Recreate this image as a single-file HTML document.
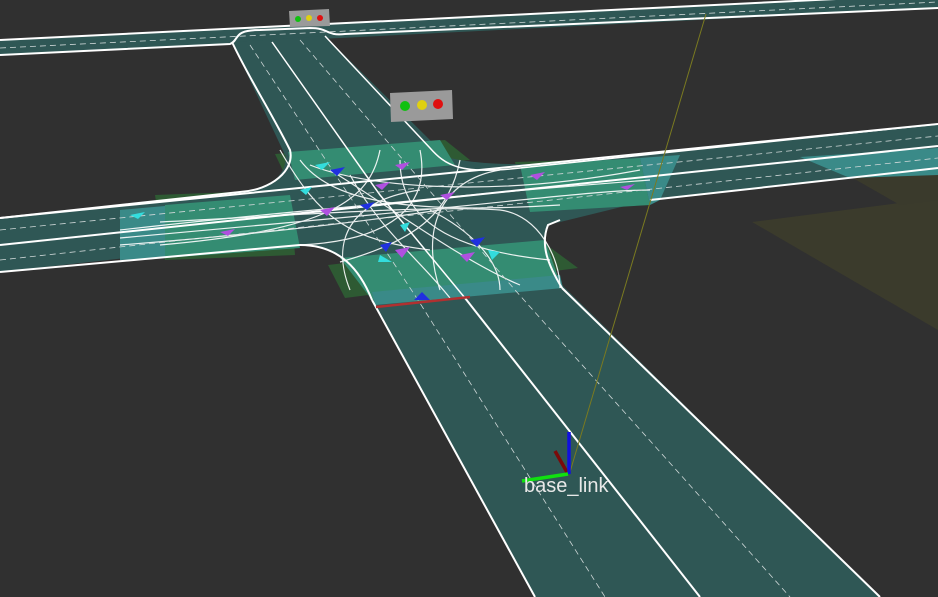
<!DOCTYPE html>
<html><head><meta charset="utf-8"><style>
html,body{margin:0;padding:0;background:#303030;overflow:hidden;width:938px;height:597px}
svg{display:block}
</style></head><body>
<svg width="938" height="597" viewBox="0 0 938 597" xmlns="http://www.w3.org/2000/svg">
<rect width="938" height="597" fill="#303030"/>
<polygon points="752,222 938,198 938,330" fill="#3b3b2c"/>
<polygon points="830,165 938,160 938,200 900,205" fill="#3a3a2c"/>
<polygon points="275,154 445,140 470,160 285,175" fill="#2e5a33"/>
<polygon points="155,195 290,190 295,255 165,260" fill="#2e5a33"/>
<polygon points="328,265 540,240 578,268 345,298" fill="#2e5a33"/>
<polygon points="515,162 640,158 650,205 525,210" fill="#2e5a33"/>
<polygon points="0,40 938,-6 938,8 0,55" fill="#2f5755"/>
<polygon points="232,42 325,36 440,150 285,155" fill="#2f5755"/>
<polygon points="0,218 938,124 938,168 0,272" fill="#2f5755"/>
<polygon points="372,300 562,285 880,597 535,597" fill="#2f5755"/>
<path d="M285,150 C290,175 270,188 240,192 L120,205 L120,258 L300,245 C340,245 360,270 372,300 L562,288 C548,265 540,245 548,225 L650,200 L640,158 C560,165 460,170 430,150 Z" fill="#2f5755"/>
<polygon points="120,210 165,206 165,258 120,260" fill="#3a8a88"/>
<polygon points="165,205 290,195 300,248 165,258" fill="#348c72"/>
<polygon points="288,152 440,140 455,165 295,180" fill="#348c72"/>
<polygon points="340,258 545,240 562,288 372,300" fill="#348c72"/>
<polygon points="372,292 560,275 563,288 375,305" fill="#3a8a88"/>
<polygon points="520,165 640,158 650,205 530,212" fill="#348c72"/>
<polygon points="640,158 680,155 660,200 650,205" fill="#3a8a88"/>
<polygon points="800,157 938,148 938,175 850,178" fill="#3a8a88"/>
<g fill="none" stroke="#ffffff" stroke-width="2">
<path d="M0,40 L938,-6"/><path d="M0,55 L230,44 C240,40 232,30 260,30 L310,28 C330,28 325,36 345,34 L938,8"/>
<path d="M0,218 L938,124"/><path d="M0,272 L300,245"/><path d="M650,200 L938,168"/>
<path d="M0,245 L938,146"/>
<path d="M232,42 C250,80 270,110 290,150 C295,170 272,190 240,192 L0,218"/>
<path d="M325,36 L430,148 C445,165 460,175 520,168 L938,124" stroke-width="1.5"/>
<path d="M372,300 L535,597"/>
<path d="M465,298 L700,597"/>
<path d="M562,288 L880,597"/>
<path d="M562,288 C548,265 540,245 548,225 L560,220"/>
<path d="M300,245 C340,245 360,270 372,300"/>
<path d="M272,42 L380,195 L465,298" stroke-width="1.5"/>
</g>
<g fill="none" stroke="#ffffff" stroke-width="1.2" opacity="0.9">
<path d="M280,150 C320,220 350,240 430,250"/>
<path d="M300,160 C330,200 400,215 560,205"/>
<path d="M120,230 C250,215 320,210 420,200 C470,195 520,190 650,180"/>
<path d="M120,245 C250,235 360,222 440,210"/>
<path d="M350,290 C330,240 350,200 420,190"/>
<path d="M440,290 C420,230 440,180 500,170"/>
<path d="M330,170 C380,200 460,260 520,285"/>
<path d="M420,150 C430,200 400,240 300,245"/>
<path d="M400,160 C400,220 450,250 550,260"/>
<path d="M160,222 C300,215 430,205 500,210 C540,215 560,260 560,288"/>
<path d="M120,238 C260,225 380,215 520,200 C580,194 620,190 650,190"/>
<path d="M350,175 C380,230 420,260 450,298"/>
<path d="M460,160 C450,210 420,240 340,262"/>
<path d="M380,150 C370,200 330,230 160,245"/>
<path d="M310,165 C360,185 480,200 640,170"/>
<path d="M430,210 C470,230 500,260 500,290"/>
</g>
<g fill="none" stroke="#cfd8d8" stroke-width="0.8" stroke-dasharray="6 4">
<path d="M0,230 L938,136"/><path d="M0,260 L938,158"/><path d="M0,48 L938,2"/>
<path d="M250,45 L418,300 L605,597"/><path d="M300,40 L515,290 L790,597"/>
</g>
<g>
<polygon points="315,165 330,162 322,170" fill="#33dddd"/><polygon points="330,170 345,167 337,176" fill="#2030e0"/>
<polygon points="375,185 390,182 382,190" fill="#b050e0"/><polygon points="395,165 410,162 402,170" fill="#b050e0"/>
<polygon points="320,210 335,207 327,216" fill="#b050e0"/><polygon points="360,205 375,202 367,210" fill="#2030e0"/>
<polygon points="440,195 455,192 447,200" fill="#b050e0"/><polygon points="470,240 485,237 477,247" fill="#2030e0"/>
<polygon points="395,250 410,247 402,258" fill="#b050e0"/><polygon points="380,255 392,262 378,262" fill="#33dddd"/>
<polygon points="460,255 475,252 467,262" fill="#b050e0"/><polygon points="488,250 500,252 492,260" fill="#33dddd"/>
<polygon points="220,232 235,229 228,236" fill="#b050e0"/><polygon points="130,215 145,212 138,219" fill="#33dddd"/>
<polygon points="530,175 545,172 537,180" fill="#b050e0"/><polygon points="620,187 635,184 627,190" fill="#b050e0"/>
<polygon points="414,300 422,292 430,300" fill="#2030e0"/><polygon points="400,225 410,222 405,232" fill="#33dddd"/>
<polygon points="380,245 392,242 386,252" fill="#2030e0"/><polygon points="300,190 312,187 306,195" fill="#33dddd"/>
</g>
<line x1="376" y1="307" x2="470" y2="297" stroke="#b03030" stroke-width="2.5"/>
<polygon points="390,93 452,90 453,119 391,122" fill="#9a9a9a"/>
<circle cx="405" cy="106" r="5" fill="#10c010"/><circle cx="422" cy="105" r="5" fill="#e0d010"/><circle cx="438" cy="104" r="5" fill="#e01010"/>
<polygon points="289,11 329,9 330,26 290,27" fill="#9a9a9a"/>
<circle cx="298" cy="19" r="3" fill="#10c010"/><circle cx="309" cy="18" r="3" fill="#e0d010"/><circle cx="320" cy="18" r="3" fill="#e01010"/>
<line x1="706" y1="14" x2="570" y2="472" stroke="#7a7a20" stroke-width="1"/>
<line x1="568" y1="474" x2="555" y2="451" stroke="#7a0a0a" stroke-width="3.5"/>
<line x1="569" y1="474" x2="569" y2="432" stroke="#1010e0" stroke-width="3.5"/>
<line x1="568" y1="474" x2="522" y2="481" stroke="#10e010" stroke-width="3.5"/>
<text x="524" y="492" font-family="Liberation Sans, sans-serif" font-size="20" fill="#e8e8e8">base_link</text>
</svg>
</body></html>
